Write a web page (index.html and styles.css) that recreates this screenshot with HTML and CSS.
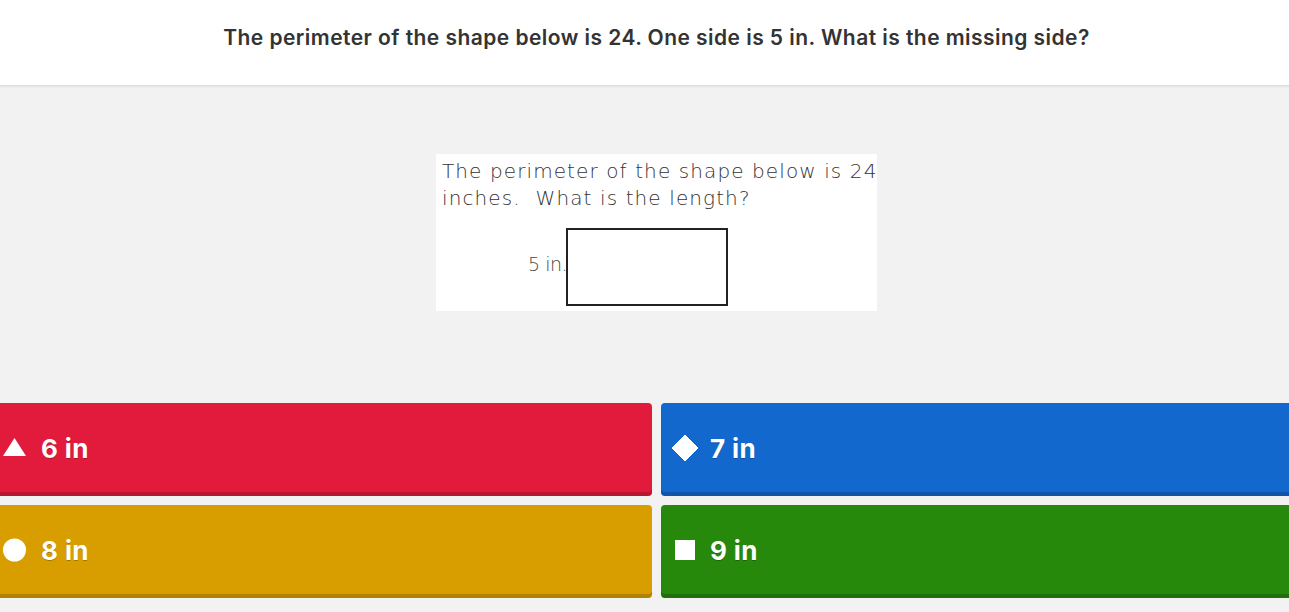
FILE: index.html
```html
<!DOCTYPE html>
<html>
<head>
<meta charset="utf-8">
<link rel="stylesheet" href="styles.css">
</head>
<body>
<div class="page">
  <header class="top">
    <h1 class="question">The perimeter of the shape below is 24. One side is 5 in. What is the missing side?</h1>
  </header>
  <main class="stage">
    <figure class="media">
      <p class="media-text">The perimeter of the shape below is 24<br>inches.&nbsp; What is the length?</p>
      <div class="shape-row">
        <span class="shape-label">5 in.</span>
        <div class="shape-rect"></div>
      </div>
    </figure>
  </main>
  <section class="answers">
    <div class="answer red">
      <span class="icon"><svg viewBox="0 0 26 26" width="26" height="26"><polygon points="0,21 11.5,3 23,21" fill="#fff"/></svg></span>
      <span class="label">6 in</span>
    </div>
    <div class="answer blue">
      <span class="icon"><svg viewBox="0 0 26 26" width="26" height="26"><polygon points="13,0 26,13 13,26 0,13" fill="#fff" stroke="#fff" stroke-linejoin="round" stroke-width="1"/></svg></span>
      <span class="label">7 in</span>
    </div>
    <div class="answer yellow">
      <span class="icon"><svg viewBox="0 0 26 26" width="26" height="26"><circle cx="11.5" cy="13" r="11.5" fill="#fff"/></svg></span>
      <span class="label">8 in</span>
    </div>
    <div class="answer green">
      <span class="icon"><svg viewBox="0 0 26 26" width="26" height="26"><rect x="3" y="3" width="20" height="20" fill="#fff"/></svg></span>
      <span class="label">9 in</span>
    </div>
  </section>
</div>
</body>
</html>
```
FILE: styles.css
```css
html, body {
  margin: 0;
  padding: 0;
  background: #f2f2f2;
  overflow: hidden;
}
body {
  width: 1289px;
  height: 612px;
  font-family: Inter, "Open Sans", sans-serif;
}
.page {
  width: 1329px;
  margin-left: -8px;
}
.top {
  height: 85px;
  background: #fff;
  box-shadow: 0 1px 3px rgba(0,0,0,0.12);
  display: flex;
  align-items: center;
  justify-content: center;
  position: relative;
  z-index: 1;
}
.question {
  margin: 0 0 10px 0;
  font-size: 21px;
  font-weight: 600;
  color: #333;
  letter-spacing: 0.45px;
  white-space: nowrap;
}
.stage {
  height: 317px;
  display: flex;
  justify-content: center;
  align-items: flex-start;
  padding-top: 69px;
  box-sizing: border-box;
}
.media {
  margin: 0;
  width: 441px;
  height: 157px;
  background: #fff;
  box-sizing: border-box;
  padding: 4px 0 0 6px;
  font-family: "DejaVu Sans", sans-serif;
  color: #333;
}
.media-text {
  margin: 0;
  font-size: 20px;
  font-weight: 200;
  line-height: 27px;
  letter-spacing: 1.1px;
  white-space: nowrap;
}
.shape-row {
  display: flex;
  align-items: center;
  margin-top: 16px;
  padding-left: 86px;
}
.shape-label {
  font-size: 19px;
  font-weight: 200;
  color: #444;
  width: 38px;
  flex-shrink: 0;
  white-space: nowrap;
  margin-top: -6px;
  letter-spacing: -0.5px;
}
.shape-rect {
  width: 158px;
  height: 74px;
  border: 2px solid #222;
}
.answers {
  display: grid;
  grid-template-columns: 1fr 1fr;
  gap: 9px;
  padding-top: 1px;
}
.answer {
  height: 93px;
  border-radius: 4px;
  display: flex;
  align-items: center;
  padding-left: 11px;
  box-sizing: border-box;
  box-shadow: inset 0 -4px 0 rgba(0,0,0,0.18);
  color: #fff;
}
.red { background: #e21b3c; }
.blue { background: #1368ce; }
.yellow { background: #d89e00; }
.green { background: #26890c; }
.icon {
  width: 26px;
  height: 26px;
  display: flex;
  margin-right: 12px;
  margin-top: -3px;
}
.label {
  font-size: 26px;
  font-weight: 700;
  margin-top: -3px;
  letter-spacing: 0.4px;
  text-shadow: 0 1px 0 rgba(0,0,0,0.25);
}
```
